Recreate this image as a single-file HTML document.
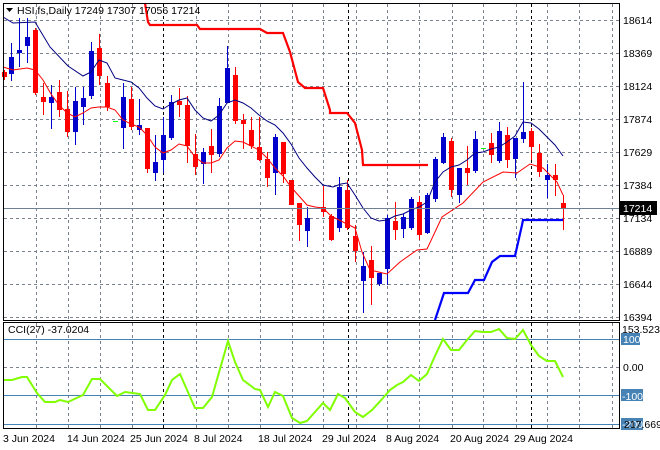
<!DOCTYPE html>
<html><head><meta charset="utf-8"><style>
body{margin:0;background:#fff;width:660px;height:450px;overflow:hidden}
svg{display:block;font-family:"Liberation Sans",sans-serif}
</style></head><body>
<svg id="s" width="660" height="450" xmlns="http://www.w3.org/2000/svg">
<rect width="660" height="450" fill="#fff"/>
<g id="grid" stroke="#7a8290" stroke-dasharray="3,3" stroke-width="1"></g>
<g id="c"></g>
<polyline fill="none" stroke="#ff0000" stroke-width="2.2" points="145,3 148,22 150,25 197,25 200,29 260,29 267,33 283,33 290,52 298,82 305,88 323,88 330,110 330,113 347,113 355,123 362,150 363,165 428,165"/>
<polyline fill="none" stroke="#0000ff" stroke-width="2.2" points="435,320 444,293 468,293 475,280 484,280 492,262 500,256 515,256 522,225 523,220 563,220"/>
<polyline id="bma" fill="none" stroke="#000080" stroke-width="1"/>
<polyline id="rma" fill="none" stroke="#ff0000" stroke-width="1"/>
<line x1="3" y1="208.5" x2="619" y2="208.5" stroke="#708090"/>
<polyline id="cci" fill="none" stroke="#7fff00" stroke-width="2"/>
<rect x="3.5" y="3.5" width="616" height="317" fill="none" stroke="#000"/>
<rect x="3.5" y="322.5" width="616" height="106" fill="none" stroke="#000"/>
<g font-size="10.5" fill="#000">
<path d="M6 8 L13 8 L9.5 12 Z" fill="#000"/>
<text x="17" y="14">HSI,fs,Daily  17249 17307 17056 17214</text>
<text x="8" y="333">CCI(27) -37.0204</text>
<text x="623" y="24">18614</text><text x="623" y="57">18369</text><text x="623" y="90">18124</text>
<text x="623" y="123">17874</text><text x="623" y="156">17629</text><text x="623" y="189">17384</text>
<text x="623" y="222">17134</text><text x="623" y="255">16889</text><text x="623" y="288">16644</text>
<text x="623" y="321">16394</text>
<rect x="620" y="201" width="37" height="14" fill="#000"/><text x="623" y="212" fill="#fff">17214</text>
<text x="622" y="333">153.5238</text>
<rect x="621" y="333" width="19" height="12" fill="#4682b4"/><text x="623" y="343" fill="#fff">100</text>
<text x="623" y="371">0.00</text>
<rect x="621" y="389" width="22" height="12" fill="#4682b4"/><text x="622" y="400" fill="#fff">-100</text>
<rect x="621" y="418" width="22" height="12" fill="#4682b4"/><text x="622" y="428" fill="#fff">-200</text>
<text x="624" y="428">217.669</text>
<text x="3" y="442">3 Jun 2024</text><text x="67" y="442">14 Jun 2024</text><text x="130" y="442">25 Jun 2024</text>
<text x="194" y="442">8 Jul 2024</text><text x="258" y="442">18 Jul 2024</text><text x="322" y="442">29 Jul 2024</text>
<text x="386" y="442">8 Aug 2024</text><text x="450" y="442">20 Aug 2024</text><text x="514" y="442">29 Aug 2024</text>
</g>
</svg>
<script>
var NS="http://www.w3.org/2000/svg",g=document.getElementById('grid'),c=document.getElementById('c');
function el(p,t,a){var e=document.createElementNS(NS,t);for(var k in a)e.setAttribute(k,a[k]);p.appendChild(e);return e;}
[20,53,86,119,152,185,218,251,284,317].forEach(function(y){el(g,'line',{x1:4,x2:619,y1:y+.5,y2:y+.5});});
[36,68,100,132,196,228,260,292,323,356,387,419,452,483,516,547,579,612].forEach(function(x){el(g,'line',{x1:x+.5,x2:x+.5,y1:4,y2:320});el(g,'line',{x1:x+.5,x2:x+.5,y1:323,y2:428});});
[163,348,531].forEach(function(x){el(g,'line',{x1:x+.5,x2:x+.5,y1:4,y2:320,stroke:'#000'});el(g,'line',{x1:x+.5,x2:x+.5,y1:323,y2:428,stroke:'#000'});});
el(g,'line',{x1:4,x2:619,y1:367.5,y2:367.5});
[339,395,424].forEach(function(y){el(g,'line',{x1:4,x2:619,y1:y+.5,y2:y+.5,stroke:'#4682b4','stroke-dasharray':'none'});});
var d=[[4,'r',72,77,70,80],[11,'b',57,74,43,81],[19,'b',50,53,18,67],[27,'b',37,46,18,63],[35,'r',30,93,28,95],[43,'r',97,102,83,115],[51,'b',97,103,85,129],[59,'r',92,110,80,117],[67,'r',109,132,91,137],[75,'b',101,132,87,145],[83,'b',98,107,87,125],[91,'b',51,96,42,99],[99,'r',48,76,34,85],[107,'r',83,107,76,111],[115,'g',121,121,121,121],[123,'b',97,128,83,149],[131,'r',99,127,87,130],[139,'b',125,130,99,135],[147,'r',128,169,128,173],[155,'b',162,173,135,181],[163,'b',135,160,117,173],[171,'b',102,138,95,140],[179,'r',101,105,88,117],[187,'r',105,146,96,163],[195,'r',154,167,134,175],[203,'b',152,164,148,184],[211,'r',146,155,129,173],[219,'b',106,154,98,157],[227,'b',68,103,46,103],[235,'r',75,121,67,124],[243,'r',120,124,114,149],[251,'r',130,146,117,149],[259,'r',147,160,117,161],[267,'r',159,178,152,187],[275,'b',137,173,134,195],[283,'r',142,174,142,183],[291,'r',180,205,180,205],[299,'r',203,225,203,241],[307,'b',218,231,207,247],[323,'r',207,212,186,217],[331,'r',216,240,214,241],[339,'b',187,228,177,232],[347,'r',190,228,180,230],[355,'r',236,251,225,262],[363,'b',266,281,252,313],[371,'r',260,278,246,305],[379,'b',273,284,273,286],[387,'b',218,269,215,285],[395,'r',221,230,202,240],[403,'b',217,229,214,238],[411,'b',199,228,197,230],[419,'r',202,235,196,240],[427,'b',195,233,193,234],[435,'b',159,199,157,202],[443,'b',137,163,133,164],[451,'r',141,190,138,197],[459,'b',168,195,168,203],[467,'r',168,173,146,185],[475,'b',139,171,131,173],[483,'g',148,148,148,148],[491,'r',143,155,133,163],[499,'b',131,161,122,163],[507,'r',135,160,127,168],[515,'b',138,159,138,178],[523,'b',132,139,82,143],[531,'r',131,147,128,160],[539,'r',153,172,144,177],[547,'b',175,180,164,198],[555,'r',175,180,164,196],[563,'r',203,208,195,230]];
d.forEach(function(a){var col=a[1]=='r'?'#ff0000':a[1]=='b'?'#0000cd':'#00ff00';
if(a[1]=='g'){el(c,'rect',{x:a[0]-2,y:a[2],width:5,height:1,fill:col});return;}
el(c,'rect',{x:a[0],y:a[4],width:1,height:a[5]-a[4],fill:col});
el(c,'rect',{x:a[0]-2,y:a[2],width:5,height:Math.max(1,a[3]-a[2]),fill:col});});
document.getElementById('bma').setAttribute('points','3,17 13,23 35,22 50,47 68,66 83,76 91,72 99,60 107,63 115,78 123,80 131,82 139,88 147,98 155,106 163,109 171,104 179,100 187,98 195,110 203,118 211,121 219,115 227,103 235,100 243,103 251,108 259,115 267,121 275,125 283,133 291,144 299,158 307,168 315,177 323,185 333,187 341,184 347,183 355,195 363,208 371,218 379,221 387,220 395,216 403,214 411,210 419,207 427,202 435,182 443,172 451,167 459,165 467,160 475,153 483,152 491,149 499,147 507,142 515,136 523,122 531,123 539,129 547,137 555,145 563,156');
document.getElementById('rma').setAttribute('points','3,67 13,70 27,68 35,70 43,80 51,94 59,105 67,113 75,117 83,113 91,108 99,107 107,107 115,110 123,120 131,124 139,127 147,135 155,147 163,153 171,150 179,144 187,146 195,157 203,163 211,163 219,160 227,148 235,141 243,142 251,146 259,150 267,158 275,168 283,176 291,187 299,196 307,205 315,207 323,208 331,216 343,222 355,228 362,252 370,270 387,274 400,262 417,250 427,249 435,232 442,217 463,203 483,182 503,172 517,173 530,164 543,168 557,182 563,195');
document.getElementById('cci').setAttribute('points','3,380 12,380 22,377 27,377 37,393 45,402 55,402 60,400 68,402 83,395 92,379 100,379 117,396 125,392 140,394 148,410 155,410 165,395 172,380 180,374 195,408 203,408 212,397 228,341 235,362 243,380 255,389 260,390 268,407 275,392 283,396 292,418 300,423 307,421 323,403 330,410 338,394 345,398 355,412 363,417 372,410 383,398 390,390 397,385 403,382 411,375 419,381 427,374 435,356 443,339 451,350 459,350 467,340 475,331 483,332 491,332 499,329 507,338 515,339 523,330 531,345 539,356 547,361 555,361 563,377');
</script>
</body></html>
